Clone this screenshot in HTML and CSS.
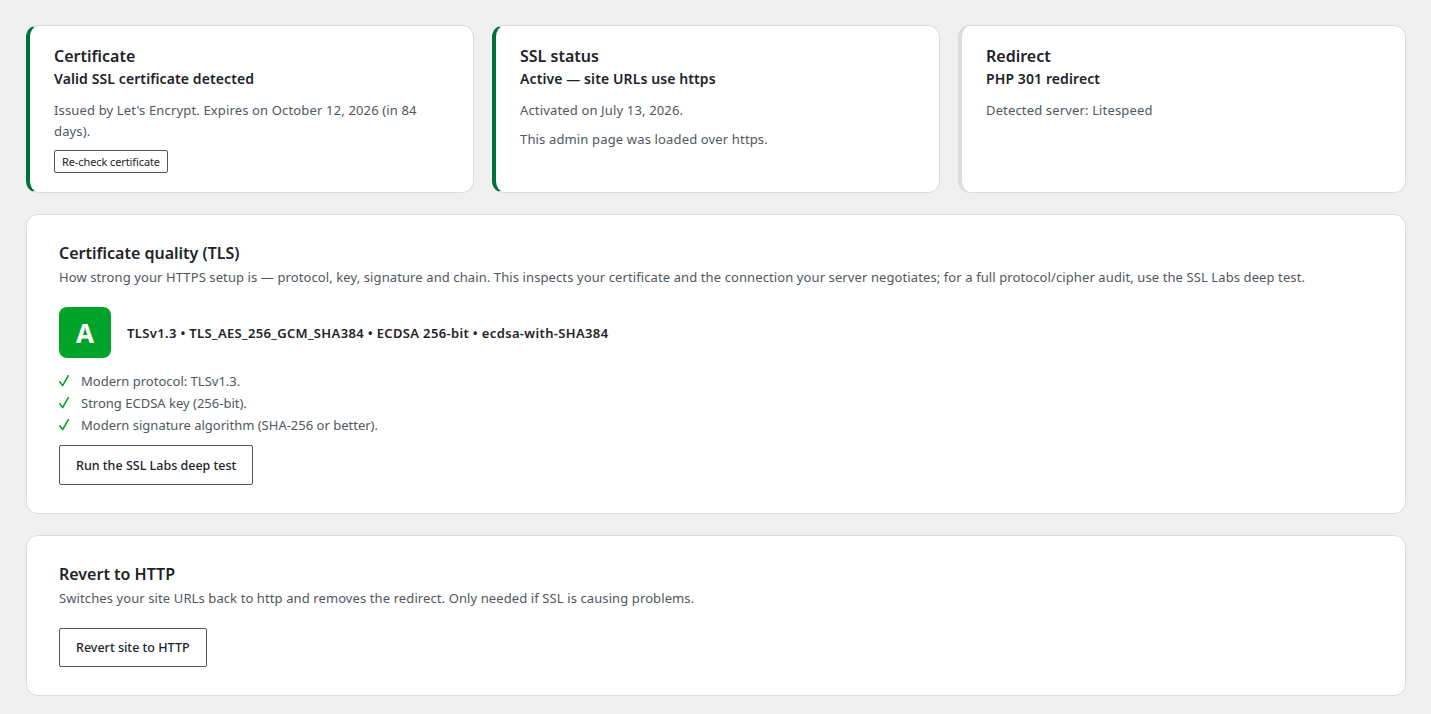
FILE: index.html
```html
<!DOCTYPE html>
<html lang="en">
<head>
<meta charset="utf-8">
<title>SSL</title>
<link rel="stylesheet" href="styles.css">
</head>
<body>
<div class="wrap">
  <div class="status-row">
    <div class="card status ok">
      <h3 class="card-title">Certificate</h3>
      <div class="card-sub">Valid SSL certificate detected</div>
      <p class="card-desc">Issued by Let's Encrypt. Expires on October 12, 2026 (in 84 days).</p>
      <button class="btn-small">Re-check certificate</button>
    </div>
    <div class="card status ok">
      <h3 class="card-title">SSL status</h3>
      <div class="card-sub">Active — site URLs use https</div>
      <p class="card-desc">Activated on July 13, 2026.</p>
      <p class="card-desc">This admin page was loaded over https.</p>
    </div>
    <div class="card status neutral">
      <h3 class="card-title">Redirect</h3>
      <div class="card-sub">PHP 301 redirect</div>
      <p class="card-desc">Detected server: Litespeed</p>
    </div>
  </div>

  <div class="card panel">
    <h2 class="panel-title">Certificate quality (TLS)</h2>
    <p class="panel-desc">How strong your HTTPS setup is — protocol, key, signature and chain. This inspects your certificate and the connection your server negotiates; for a full protocol/cipher audit, use the SSL Labs deep test.</p>
    <div class="grade-row">
      <div class="grade">A</div>
      <div class="grade-meta">TLSv1.3 • TLS_AES_256_GCM_SHA384 • ECDSA 256-bit • ecdsa-with-SHA384</div>
    </div>
    <ul class="checks">
      <li><svg class="tick" width="10" height="12" viewBox="0 0 10 12"><path d="M0.8 6.8 L3.6 10.6 L9.2 0.8" fill="none" stroke="#00a32a" stroke-width="1.6" stroke-linecap="round" stroke-linejoin="round"/></svg>Modern protocol: TLSv1.3.</li>
      <li><svg class="tick" width="10" height="12" viewBox="0 0 10 12"><path d="M0.8 6.8 L3.6 10.6 L9.2 0.8" fill="none" stroke="#00a32a" stroke-width="1.6" stroke-linecap="round" stroke-linejoin="round"/></svg>Strong ECDSA key (256-bit).</li>
      <li><svg class="tick" width="10" height="12" viewBox="0 0 10 12"><path d="M0.8 6.8 L3.6 10.6 L9.2 0.8" fill="none" stroke="#00a32a" stroke-width="1.6" stroke-linecap="round" stroke-linejoin="round"/></svg>Modern signature algorithm (SHA-256 or better).</li>
    </ul>
    <button class="btn">Run the SSL Labs deep test</button>
  </div>

  <div class="card panel">
    <h2 class="panel-title">Revert to HTTP</h2>
    <p class="panel-desc">Switches your site URLs back to http and removes the redirect. Only needed if SSL is causing problems.</p>
    <button class="btn btn-revert">Revert site to HTTP</button>
  </div>
</div>
</body>
</html>
```

FILE: styles.css
```css
html, body {
  margin: 0;
  padding: 0;
  background: #f0f0f1;
}
body {
  font-family: "Noto Sans", "Open Sans", sans-serif;
  color: #1d2327;
}
.wrap {
  padding: 25px 25px 19px 26px;
  display: flex;
  flex-direction: column;
  gap: 21px;
}
.status-row {
  display: grid;
  grid-template-columns: 1fr 1fr 1fr;
  gap: 18px;
}
.card {
  background: #fff;
  border: 1px solid #dcdcde;
  border-radius: 12px;
  box-sizing: border-box;
}
.status {
  padding: 19px 24px 20px 24px;
  height: 168px;
  border-left-width: 4px;
}
.status.ok { border-left-color: #00703c; }
.status.neutral { border-left-color: #dcdcde; }
.card-title {
  margin: 0;
  font-size: 16px;
  font-weight: 600;
  line-height: 22px;
  color: #1d2327;
}
.card-sub {
  margin-top: 1px;
  font-size: 14px;
  font-weight: 600;
  line-height: 22px;
  color: #1d2327;
  letter-spacing: 0.1px;
}
.card-desc {
  margin: 10px 0 8px;
  font-size: 13px;
  line-height: 21px;
  color: #50575e;
  letter-spacing: 0.15px;
}
.card-desc + .card-desc { margin-top: 8px; }
.btn-small {
  display: block;
  font-family: inherit;
  font-size: 11px;
  line-height: 20px;
  height: 23px;
  padding: 0 7px;
  background: #fff;
  color: #1d2327;
  border: 1px solid #50575e;
  border-radius: 2px;
  cursor: pointer;
  letter-spacing: -0.1px;
}
.panel {
  padding: 26px 32px 28px;
}
.panel-title {
  margin: 0;
  font-size: 16px;
  font-weight: 600;
  line-height: 24px;
  color: #1d2327;
}
.panel-desc {
  margin: 2px 0 0;
  font-size: 13px;
  line-height: 20px;
  color: #50575e;
  letter-spacing: 0.1px;
}
.grade-row {
  display: flex;
  align-items: center;
  gap: 16px;
  margin-top: 20px;
}
.grade {
  width: 52px;
  height: 51px;
  border-radius: 8px;
  background: #00a32a;
  color: #fff;
  font-size: 26px;
  font-weight: 700;
  display: flex;
  align-items: center;
  justify-content: center;
}
.grade-meta {
  font-size: 13px;
  font-weight: 600;
  color: #1d2327;
  letter-spacing: 0.35px;
}
.checks {
  list-style: none;
  margin: 12px 0 9px;
  padding: 0;
}
.checks li {
  font-size: 13px;
  line-height: 22px;
  color: #50575e;
  display: flex;
  align-items: center;
}
.tick {
  flex: none;
  margin-right: 12px;
}
.btn {
  font-family: inherit;
  font-size: 12.5px;
  font-weight: 500;
  height: 40px;
  padding: 0 16px;
  background: #fff;
  color: #1d2327;
  border: 1px solid #50575e;
  border-radius: 2px;
  cursor: pointer;
  display: block;
}
.btn-revert {
  margin-top: 20px;
  height: 39px;
}
```
